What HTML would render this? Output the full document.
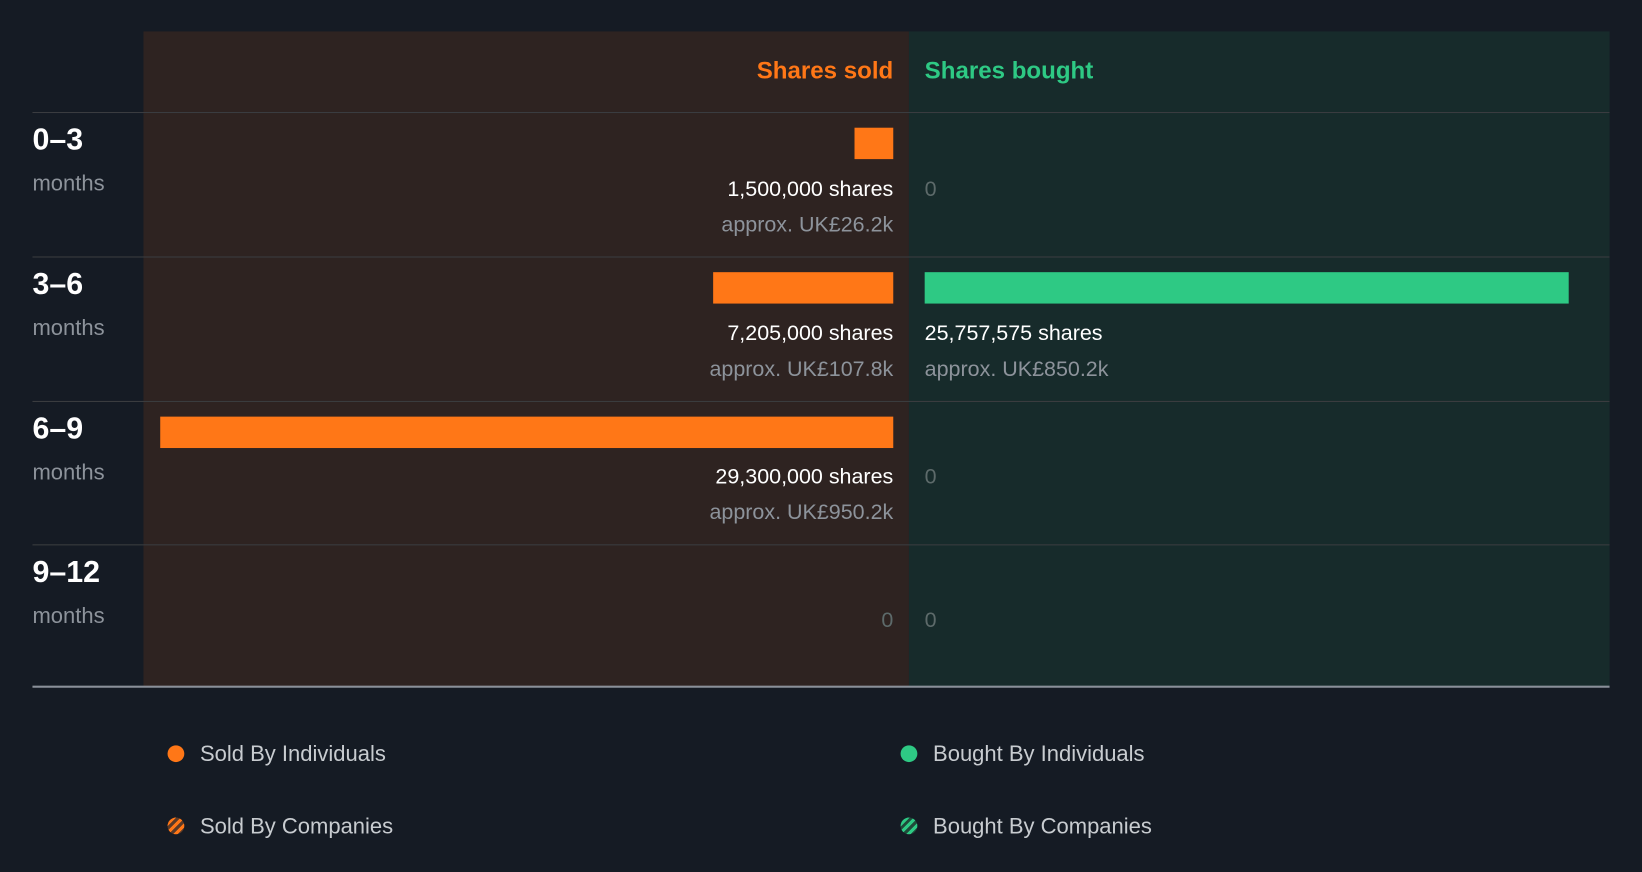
<!DOCTYPE html>
<html><head><meta charset="utf-8"><style>
html,body{margin:0;padding:0;background:#151b24;width:1642px;height:872px;overflow:hidden}
#w{position:absolute;left:0;top:0;width:1568px;height:833px;transform:scale(1.0472,1.0468);transform-origin:0 0;font-family:"Liberation Sans",sans-serif}
.a{position:absolute}
.sold{left:137px;top:30px;width:731px;height:626px;background:#2e2321}
.bought{left:868px;top:30px;width:669px;height:626px;background:#172b2b}
.line{left:31px;width:1506px;height:1px;background:#3b3d40}
.h{font-size:23px;font-weight:bold;top:54px}
.lab{left:31px;font-size:29px;font-weight:bold;color:#fff}
.mon{left:31px;font-size:21px;color:#8d939b}
.sh{font-size:20.5px;color:#fff}
.ap{font-size:20.5px;color:#8d939b}
.z{font-size:20.5px;color:#5d6a6a}
.r{right:715px;text-align:right}
.bar{height:30px}
.or{background:#ff7717}.gr{background:#2ec984}
.lg{font-size:21px;color:#c8ccd0}
.dot{width:16px;height:16px;border-radius:50%}
</style></head><body><div id="w">
<div class="a sold"></div><div class="a bought"></div>
<div class="a h r" style="color:#ff7717">Shares sold</div>
<div class="a h" style="left:883px;color:#2ec984">Shares bought</div>
<div class="a line" style="top:107px"></div>
<div class="a line" style="top:245px"></div>
<div class="a line" style="top:383px"></div>
<div class="a line" style="top:520px"></div>
<div class="a" style="left:31px;top:655px;width:1506px;height:2px;background:#8a9099"></div>

<div class="a lab" style="top:118px">0–3</div><div class="a mon" style="top:164px">months</div>
<div class="a bar or" style="left:816px;top:122px;width:37px"></div>
<div class="a sh r" style="top:169px">1,500,000 shares</div>
<div class="a ap r" style="top:203px">approx. UK£26.2k</div>
<div class="a z" style="left:883px;top:169px">0</div>

<div class="a lab" style="top:256px">3–6</div><div class="a mon" style="top:302px">months</div>
<div class="a bar or" style="left:681px;top:260px;width:172px"></div>
<div class="a bar gr" style="left:883px;top:260px;width:615px"></div>
<div class="a sh r" style="top:307px">7,205,000 shares</div>
<div class="a ap r" style="top:341px">approx. UK£107.8k</div>
<div class="a sh" style="left:883px;top:307px">25,757,575 shares</div>
<div class="a ap" style="left:883px;top:341px">approx. UK£850.2k</div>

<div class="a lab" style="top:394px">6–9</div><div class="a mon" style="top:440px">months</div>
<div class="a bar or" style="left:153px;top:398px;width:700px"></div>
<div class="a sh r" style="top:444px">29,300,000 shares</div>
<div class="a ap r" style="top:478px">approx. UK£950.2k</div>
<div class="a z" style="left:883px;top:444px">0</div>

<div class="a lab" style="top:531px">9–12</div><div class="a mon" style="top:577px">months</div>
<div class="a z r" style="top:581px">0</div>
<div class="a z" style="left:883px;top:581px">0</div>

<div class="a dot" style="left:160px;top:712px;background:#ff7717"></div>
<div class="a lg" style="left:191px;top:709px">Sold By Individuals</div>
<div class="a dot" style="left:860px;top:712px;background:#2ec984"></div>
<div class="a lg" style="left:891px;top:709px">Bought By Individuals</div>
<div class="a dot" style="left:160px;top:781px;background:repeating-linear-gradient(135deg,#5a3a28 0 3px,#ff7717 3px 6px)"></div>
<div class="a lg" style="left:191px;top:778px">Sold By Companies</div>
<div class="a dot" style="left:860px;top:781px;background:repeating-linear-gradient(135deg,#1f4a3a 0 3px,#2ec984 3px 6px)"></div>
<div class="a lg" style="left:891px;top:778px">Bought By Companies</div>
</div></body></html>
